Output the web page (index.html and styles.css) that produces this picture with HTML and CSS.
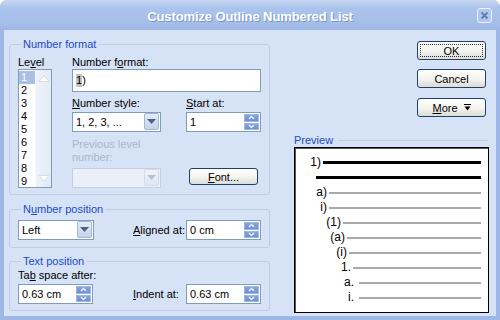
FILE: index.html
```html
<!DOCTYPE html>
<html lang="en">
  <head>
    <meta charset="UTF-8" />
    <title>Customize Outline Numbered List</title>
    <link rel="stylesheet" href="styles.css">
  </head>
  <body>
    <div class="window">
      <div class="titlebar">
        <span></span>
        <span class="title">Customize Outline Numbered List</span>
        <span class="close">
          <svg width="15" height="15" viewBox="0 0 15 15"><rect x=".5" y=".5" width="14" height="14" rx="2.5" fill="#b2c7ec" stroke="#eef3fc"/><path d="M4.5 4.5l6 6M10.5 4.5l-6 6" stroke="#5f7fba" stroke-width="1.8"/></svg>
        </span>
      </div>

      <div class="client">
        <div class="left">
          <fieldset class="group group-format">
            <legend>Number format</legend>
            <div class="format-body">
              <div class="level-col">
                <div class="label">Le<u>v</u>el</div>
                <div class="listbox">
                  <div class="list-items">
                    <div class="item selected">1</div>
                    <div class="item">2</div>
                    <div class="item">3</div>
                    <div class="item">4</div>
                    <div class="item">5</div>
                    <div class="item">6</div>
                    <div class="item">7</div>
                    <div class="item">8</div>
                    <div class="item">9</div>
                  </div>
                  <div class="list-scroll">
                    <svg width="14" height="10" viewBox="0 0 14 10"><path d="M2 8.5h10L7 2.5z" fill="#fff" stroke="#d3dcea"/></svg>
                    <svg width="14" height="10" viewBox="0 0 14 10"><path d="M2 1.5h10L7 7.5z" fill="#fff" stroke="#d3dcea"/></svg>
                  </div>
                </div>
              </div>

              <div class="format-col">
                <div class="label">Number f<u>o</u>rmat:</div>
                <div class="textbox format-input"><span class="sel">1</span>)</div>

                <div class="format-row">
                  <div class="style-col">
                    <div class="label"><u>N</u>umber style:</div>
                    <div class="combo">
                      <span class="combo-text">1, 2, 3, ...</span>
                      <span class="combo-btn"><svg width="9" height="5" viewBox="0 0 9 5"><path d="M0 0h9L4.5 5z" fill="#4d6288"/></svg></span>
                    </div>
                  </div>
                  <div class="start-col">
                    <div class="label"><u>S</u>tart at:</div>
                    <div class="spin">
                      <span class="spin-text">1</span>
                      <span class="spin-btns">
                        <span class="spin-half"><svg width="7" height="5" viewBox="0 0 7 5"><path d="M1 4l2.5-2.5L6 4" fill="none" stroke="#eef3fc" stroke-width="1.3"/></svg></span>
                        <span class="spin-half"><svg width="7" height="5" viewBox="0 0 7 5"><path d="M1 1l2.5 2.5L6 1" fill="none" stroke="#eef3fc" stroke-width="1.3"/></svg></span>
                      </span>
                    </div>
                  </div>
                </div>

                <div class="format-row row-prev">
                  <div class="style-col">
                    <div class="label disabled">Previous level number:</div>
                    <div class="combo combo-disabled">
                      <span class="combo-text"></span>
                      <span class="combo-btn"><svg width="9" height="5" viewBox="0 0 9 5"><path d="M0 0h9L4.5 5z" fill="#b4c2d8"/></svg></span>
                    </div>
                  </div>
                  <div class="start-col">
                    <button class="btn btn-font"><span><u>F</u>ont...</span></button>
                  </div>
                </div>
              </div>
            </div>
          </fieldset>

          <fieldset class="group group-numpos">
            <legend>N<u>u</u>mber position</legend>
            <div class="numpos-body">
              <div class="combo combo-left">
                <span class="combo-text">Left</span>
                <span class="combo-btn"><svg width="9" height="5" viewBox="0 0 9 5"><path d="M0 0h9L4.5 5z" fill="#4d6288"/></svg></span>
              </div>
              <div class="field-inline">
                <span class="inline-label"><u>A</u>ligned at:</span>
                <div class="spin">
                  <span class="spin-text">0 cm</span>
                  <span class="spin-btns">
                    <span class="spin-half"><svg width="7" height="5" viewBox="0 0 7 5"><path d="M1 4l2.5-2.5L6 4" fill="none" stroke="#eef3fc" stroke-width="1.3"/></svg></span>
                    <span class="spin-half"><svg width="7" height="5" viewBox="0 0 7 5"><path d="M1 1l2.5 2.5L6 1" fill="none" stroke="#eef3fc" stroke-width="1.3"/></svg></span>
                  </span>
                </div>
              </div>
            </div>
          </fieldset>

          <fieldset class="group group-textpos">
            <legend>Text position</legend>
            <div class="textpos-body">
              <div class="tab-col">
                <div class="label">Ta<u>b</u> space after:</div>
                <div class="spin">
                  <span class="spin-text">0.63 cm</span>
                  <span class="spin-btns">
                    <span class="spin-half"><svg width="7" height="5" viewBox="0 0 7 5"><path d="M1 4l2.5-2.5L6 4" fill="none" stroke="#eef3fc" stroke-width="1.3"/></svg></span>
                    <span class="spin-half"><svg width="7" height="5" viewBox="0 0 7 5"><path d="M1 1l2.5 2.5L6 1" fill="none" stroke="#eef3fc" stroke-width="1.3"/></svg></span>
                  </span>
                </div>
              </div>
              <div class="field-inline">
                <span class="inline-label"><u>I</u>ndent at:</span>
                <div class="spin">
                  <span class="spin-text">0.63 cm</span>
                  <span class="spin-btns">
                    <span class="spin-half"><svg width="7" height="5" viewBox="0 0 7 5"><path d="M1 4l2.5-2.5L6 4" fill="none" stroke="#eef3fc" stroke-width="1.3"/></svg></span>
                    <span class="spin-half"><svg width="7" height="5" viewBox="0 0 7 5"><path d="M1 1l2.5 2.5L6 1" fill="none" stroke="#eef3fc" stroke-width="1.3"/></svg></span>
                  </span>
                </div>
              </div>
            </div>
          </fieldset>
        </div>

        <div class="right">
          <button class="btn btn-side btn-ok"><span class="focus">OK</span></button>
          <button class="btn btn-side btn-cancel">Cancel</button>
          <button class="btn btn-side btn-more"><span><u>M</u>ore</span><svg class="more-icon" width="7" height="7" viewBox="0 0 7 7"><path d="M0 .5h7" stroke="#000"/><path d="M.5 2.5h6L3.5 6.5z" fill="#000"/></svg></button>

          <div class="preview-head">
            <span class="preview-title">Preview</span>
            <span class="preview-rule"></span>
          </div>
          <div class="preview">
            <div class="prow w28"><span class="plabel">1)</span><span class="pline black"></span></div>
            <div class="prow w21"><span class="plabel"></span><span class="pline black"></span></div>
            <div class="prow w34"><span class="plabel">a)</span><span class="pline"></span></div>
            <div class="prow w34"><span class="plabel">i)</span><span class="pline"></span></div>
            <div class="prow w48"><span class="plabel">(1)</span><span class="pline"></span></div>
            <div class="prow w52"><span class="plabel">(a)</span><span class="pline"></span></div>
            <div class="prow w54"><span class="plabel">(i)</span><span class="pline"></span></div>
            <div class="prow w58"><span class="plabel">1.</span><span class="pline"></span></div>
            <div class="prow w64 wide-gap"><span class="plabel">a.</span><span class="pline"></span></div>
            <div class="prow w64 wide-gap"><span class="plabel">i.</span><span class="pline"></span></div>
          </div>
        </div>
      </div>
    </div>
  </body>
</html>
```

FILE: styles.css
```css
* {
  box-sizing: border-box;
}

body {
  margin: 0;
  font-family: "Liberation Sans", Arial, sans-serif;
  font-size: 11px;
  line-height: 13px;
  color: #000;
}

u {
  text-decoration-thickness: 1px;
  text-underline-offset: 1px;
}

/* window frame */
.window {
  width: 500px;
  height: 320px;
  display: flex;
  flex-direction: column;
  background: #9db8e6;
  border-radius: 7px 7px 0 0;
  overflow: hidden;
}
.titlebar {
  height: 30px;
  flex: none;
  display: grid;
  grid-template-columns: 1fr auto 1fr;
  align-items: center;
  padding-top: 3px;
  background: linear-gradient(#c8d8f3, #acc4ec 25%, #a5bee9 80%, #9cb6e4);
}
.title {
  color: #fff;
  font-weight: bold;
  font-size: 13px;
  letter-spacing: -0.1px;
  text-shadow: 1px 1px 0 #7b95c3;
}
.close {
  justify-self: end;
  margin-right: 8px;
  margin-top: -3px;
  height: 15px;
}

.client {
  flex: 1;
  margin: 0 4px 4px;
  padding-left: 5px;
  background: #d6e2f5;
  display: flex;
}

/* group boxes */
.left {
  width: 261px;
  display: flex;
  flex-direction: column;
}
.group {
  margin: 0;
  border: 1px solid #bfcde3;
  border-radius: 3px;
  padding: 0 8px;
  min-width: 0;
}
.group legend {
  padding: 0 2px;
  margin-left: 3px;
  color: #1b4bc4;
  line-height: 13px;
}
.group-format {
  margin-top: 8px;
  padding-top: 5px;
  padding-bottom: 6px;
}
.group-numpos {
  margin-top: 8px;
  padding-top: 4px;
  padding-bottom: 7px;
}
.group-textpos {
  margin-top: 7px;
  padding-top: 1px;
  padding-bottom: 6px;
}

.label {
  height: 13px;
  white-space: nowrap;
}
.disabled {
  color: #a9b7cc;
  white-space: normal;
  height: 26px;
}

.format-body {
  display: flex;
  gap: 20px;
}
.level-col {
  width: 34px;
}
.listbox {
  height: 119px;
  border: 1px solid #7f9db9;
  background: #fff;
  display: flex;
}
.list-items {
  flex: 1;
  padding-top: 1px;
}
.item {
  height: 13px;
  padding-left: 2px;
}
.item.selected {
  background: #a9bfe6;
  color: #fff;
}
.list-scroll {
  width: 16px;
  background: linear-gradient(90deg, #eef3fa, #e3eaf5);
  border-left: 1px solid #f7f9fd;
  display: flex;
  flex-direction: column;
  justify-content: space-between;
  align-items: center;
  padding: 3px 0;
}

.format-col {
  width: 189px;
}
.textbox {
  background: #fff;
  border: 1px solid #7f9db9;
  display: flex;
  align-items: center;
  padding-left: 3px;
}
.format-input {
  height: 23px;
}
.sel {
  background: #c2c2c2;
}

.format-row {
  display: flex;
  gap: 25px;
  margin-top: 5px;
}
.row-prev {
  margin-top: 6px;
}
.style-col {
  width: 89px;
}
.start-col {
  width: 75px;
  display: flex;
  flex-direction: column;
}

/* combo and spin boxes */
.combo,
.spin {
  height: 20px;
  background: #fff;
  border: 1px solid #7f9db9;
  display: flex;
  align-items: stretch;
  margin-top: 2px;
}
.combo-text,
.spin-text {
  flex: 1;
  padding-left: 3px;
  display: flex;
  align-items: center;
  white-space: nowrap;
}
.combo-btn {
  width: 15px;
  margin: 0 1px 1px 0;
  border: 1px solid #a2b6d6;
  border-radius: 2px;
  background: linear-gradient(#e4ebf6, #c4d2e9);
  display: flex;
  align-items: center;
  justify-content: center;
}
.combo-disabled {
  background: #ebf0f8;
  border-color: #c4cfe0;
  margin-top: 4px;
}
.combo-disabled .combo-btn {
  border-color: #d3dcea;
  background: linear-gradient(#f0f4fa, #dfe6f2);
}
.combo-left {
  width: 76px;
  margin-top: 0;
}

.spin-btns {
  width: 15px;
  margin: 1px 1px 1px 0;
  display: flex;
  flex-direction: column;
  gap: 1px;
}
.spin-half {
  flex: 1;
  background: linear-gradient(#86a6dc, #6c8fd0);
  border: 1px solid #9fb8e2;
  display: flex;
  align-items: center;
  justify-content: center;
}

.numpos-body {
  display: flex;
  align-items: center;
  justify-content: space-between;
}
.field-inline {
  display: flex;
  align-items: center;
}
.inline-label {
  width: 53px;
}
.field-inline .spin {
  width: 75px;
  margin-top: 0;
}
.textpos-body {
  display: flex;
  align-items: flex-end;
  justify-content: space-between;
}
.tab-col {
  width: 75px;
}

/* push buttons */
.btn {
  font-family: "Liberation Sans", Arial, sans-serif;
  font-size: 11px;
  color: #000;
  height: 18px;
  padding: 0;
  border: 1px solid #1f3f6c;
  border-radius: 3px;
  background: linear-gradient(#ffffff, #f3f3ef 55%, #dcdcd6);
  display: flex;
  align-items: center;
  justify-content: center;
}
.btn-font {
  width: 69px;
  height: 17px;
  margin: auto 0 3px 3px;
}
.more-icon {
  margin-left: 6px;
}

.right {
  width: 195px;
  margin-left: 24px;
  display: flex;
  flex-direction: column;
}
.btn-side {
  width: 69px;
  height: 19px;
  align-self: flex-end;
  margin-right: 3px;
}
.btn-ok {
  margin-top: 11px;
  padding: 2px;
}
.focus {
  flex: 1;
  align-self: stretch;
  border: 1px dotted #333;
  display: flex;
  align-items: center;
  justify-content: center;
}
.btn-cancel {
  margin-top: 9px;
}
.btn-more {
  margin-top: 10px;
}

/* preview */
.preview-head {
  display: flex;
  align-items: center;
  gap: 5px;
  margin-top: 16px;
  height: 14px;
}
.preview-title {
  color: #1b4bc4;
}
.preview-rule {
  flex: 1;
  border-top: 1px solid #bfcde3;
  margin-right: 1px;
}
.preview {
  height: 166px;
  background: #fff;
  border: 1px solid #000;
  box-shadow: inset 1px 1px 0 #555;
  padding: 7px 7px 0 0;
}
.prow {
  display: flex;
  align-items: center;
  height: 15px;
  font-size: 12px;
}
.plabel {
  text-align: right;
  padding-right: 2px;
  flex: none;
}
.wide-gap .plabel {
  padding-right: 5px;
}
.pline {
  flex: 1;
  height: 2px;
  background: #a9a9a9;
}
.pline.black {
  height: 3px;
  background: #000;
}
.w21 .plabel { width: 21px; }
.w28 .plabel { width: 28px; }
.w34 .plabel { width: 34px; }
.w48 .plabel { width: 48px; }
.w52 .plabel { width: 52px; }
.w54 .plabel { width: 54px; }
.w58 .plabel { width: 58px; }
.w64 .plabel { width: 64px; }
```
